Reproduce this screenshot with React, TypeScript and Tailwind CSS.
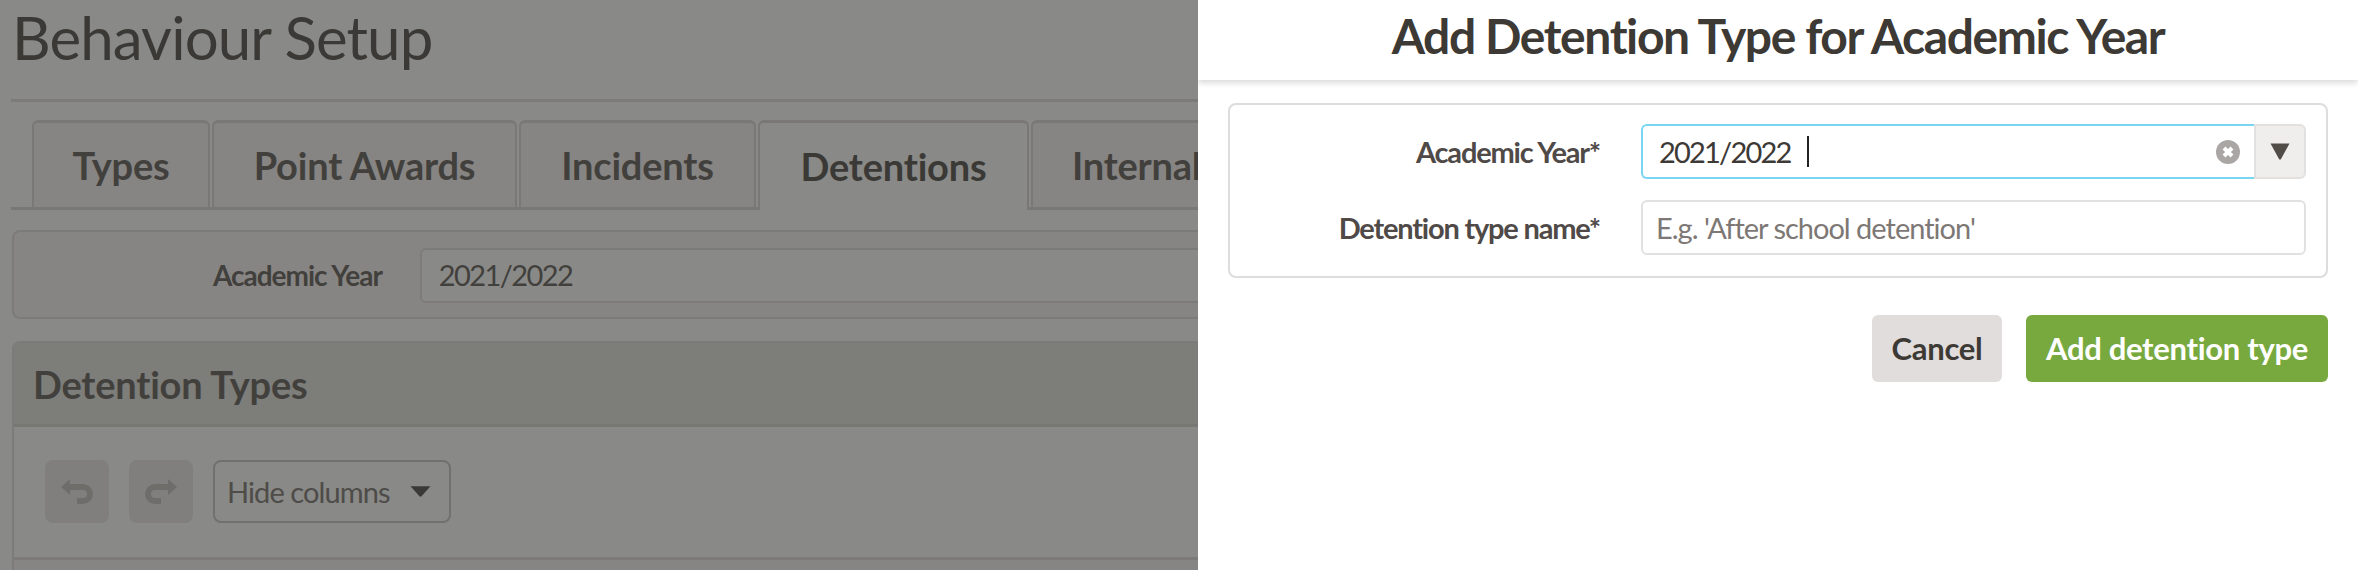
import React from "react";

const Caret = ({ className }: { className: string }) => (
  <svg viewBox="0 0 20 17" preserveAspectRatio="none" className={className} fill="currentColor">
    <path d="M0.5 0.5h19L11 16a1.2 1.2 0 0 1-2 0z" />
  </svg>
);

// heavy hooked arrow used by undo / redo
const HookArrow = ({ flip }: { flip?: boolean }) => (
  <svg viewBox="0 0 32 25" className="w-[32px] h-[25px]" fill="currentColor">
    <path
      transform={flip ? "translate(32 0) scale(-1 1)" : undefined}
      d="M0 8L9 0V5H22A10 10 0 0 1 22 25H16V19H22A4 4 0 0 0 22 11H9V16Z"
    />
  </svg>
);

const tabs = ["Types", "Point Awards", "Incidents", "Detentions", "Internal"];
const tabWidths = ["w-[178px]", "w-[305px]", "w-[237px]", "w-[271px]", "w-[211px]"];

const BackgroundPage: React.FC = () => {
  return (
    <div className="relative w-[1198px] h-full shrink-0 overflow-hidden bg-white pl-[12px]">
      <h1 className="h-[99px] text-[60px] leading-[74px] text-[#3d3935] tracking-[-0.9px]">
        Behaviour Setup
      </h1>
      <div className="-ml-[1px] w-[1300px] h-[3px] bg-[#dedcdc]" />

      <div className="flex mt-[18px] -ml-[1px] pl-[21px] gap-[2px] w-[1300px] h-[90px] border-b-[3px] border-[#d8d5d5]">
        {tabs.map((tab, i) => (
          <div
            key={tab}
            className={`${tabWidths[i]} shrink-0 flex items-center justify-center rounded-t-[6px] border-x-[2px] border-t-[3px] border-[#d8d5d5] text-[38px] font-bold ${
              tab === "Detentions"
                ? "h-[90px] bg-white text-[#3d3935]"
                : "h-[87px] bg-[#f8f4f4] text-[#4f4a47]"
            }`}
          >
            <span className="tracking-[-0.2px]">{tab}</span>
          </div>
        ))}
      </div>

      <div className="mt-[20px] w-[1300px] h-[89px] rounded-l-[8px] border-[2px] border-[#dedcdc] bg-[#fbf6f6] flex items-start pt-[16px]">
        <label className="w-[372px] mt-[8px] text-right text-[28px] leading-[38px] font-bold text-[#4f4a47] tracking-[-1px]">
          Academic Year
        </label>
        <div className="ml-[38px] w-[900px] h-[55px] rounded-l-[6px] border-[2px] border-[#dedcdc] bg-white pl-[17px] text-[29px] leading-[50px] text-[#4f4a47] tracking-[-1.6px]">
          2021/2022
        </div>
      </div>

      <div className="mt-[22px] w-[1300px] rounded-tl-[8px] border-l-[2px] border-t-[2px] border-[#dedcdc]">
        <div className="h-[84px] bg-[#e2e1de] border-b-[3px] border-[#d3d1cf] pl-[19px] text-[38px] leading-[82px] font-bold text-[#4f4a47] tracking-[-0.2px]">
          Detention Types
        </div>
        <div className="h-[130px] bg-white flex gap-[20px] pl-[31px] pt-[33px]">
          <button type="button" className="w-[64px] h-[63px] rounded-[8px] bg-[#e8e6e5] flex items-center justify-center text-[#bdb8b5]">
            <HookArrow />
          </button>
          <button type="button" className="w-[64px] h-[63px] rounded-[8px] bg-[#e8e6e5] flex items-center justify-center text-[#bdb8b5]">
            <HookArrow flip />
          </button>
          <button type="button" className="w-[238px] h-[63px] rounded-[8px] border-[2px] border-[#c4c0bd] flex items-center pl-[12px] text-[29px] text-[#6b6663] tracking-[-0.9px]">
            <span className="whitespace-nowrap">Hide columns</span>
            <Caret className="ml-[20px] w-[21px] h-[11px] shrink-0 text-[#3d3935]" />
          </button>
        </div>
        <div className="h-[30px] bg-[#fbf6f6] border-t-[3px] border-[#dedcdc]" />
      </div>

      {/* dim layer behind the side panel */}
      <div className="absolute inset-0 bg-[#3b3a37]/60" />
    </div>
  );
};

const SidePanel: React.FC = () => {
  return (
    <div className="flex-1 h-full bg-white">
      <div className="h-[80px] flex items-center justify-center shadow-[0_3px_6px_rgba(0,0,0,0.15)] pb-[8px]">
        <h2 className="text-[48px] font-bold text-[#3d3935] tracking-[-1.4px]">
          Add Detention Type for Academic Year
        </h2>
      </div>

      <div className="mt-[23px] mx-[30px] h-[175px] rounded-[8px] border-[2px] border-[#dedcdc] pt-[19px] pl-[411px] pr-[20px] flex flex-col gap-[21px] relative">
        <div className="flex h-[55px]">
          <div className="flex-1 relative rounded-l-[6px] border-[2px] border-r-0 border-[#79d5f2] flex items-center pl-[16px] text-[29px] text-[#3d3935]">
            <span className="tracking-[-1.8px]">2021/2022</span>
            <span className="ml-[17px] w-[2px] h-[31px] bg-[#222]" />
            <span className="absolute right-[14px] top-[14px] w-[24px] h-[24px] rounded-full bg-[#aaa6a3] flex items-center justify-center">
              <svg viewBox="0 0 14 14" className="w-[14px] h-[14px]" stroke="white" strokeWidth="4">
                <path d="M3 3l8 8M11 3l-8 8" />
              </svg>
            </span>
          </div>
          <div className="w-[52px] rounded-r-[6px] border-[2px] border-[#e3e1e0] bg-[#efeeed] flex items-center justify-center">
            <Caret className="w-[20px] h-[17px] text-[#524c49]" />
          </div>
        </div>
        <input
          readOnly
          placeholder="E.g. 'After school detention'"
          className="h-[55px] rounded-[6px] border-[2px] border-[#e3e1e0] pl-[13px] text-[29px] tracking-[-1px] outline-none placeholder:text-[#7d7875]"
        />
        <label className="absolute right-[726px] top-[19px] leading-[55px] text-[29px] font-bold text-[#4f4a47] tracking-[-1.2px] whitespace-nowrap">
          Academic Year*
        </label>
        <label className="absolute right-[726px] top-[95px] leading-[55px] text-[29px] font-bold text-[#4f4a47] tracking-[-1.2px] whitespace-nowrap">
          Detention type name*
        </label>
      </div>

      <div className="mt-[37px] mr-[30px] flex justify-end gap-[24px]">
        <button type="button" className="w-[130px] h-[67px] rounded-[6px] bg-[#e1dddc] text-[31px] font-bold text-[#3d3935] tracking-[-0.3px]">
          Cancel
        </button>
        <button type="button" className="w-[302px] h-[67px] rounded-[6px] bg-[#78a93e] text-[31px] font-bold text-white tracking-[-0.3px]">
          Add detention type
        </button>
      </div>
    </div>
  );
};

export default function App() {
  return (
    <div className="flex w-[2358px] h-[570px] overflow-hidden font-['Lato','Noto_Sans',sans-serif]">
      <BackgroundPage />
      <SidePanel />
    </div>
  );
}
